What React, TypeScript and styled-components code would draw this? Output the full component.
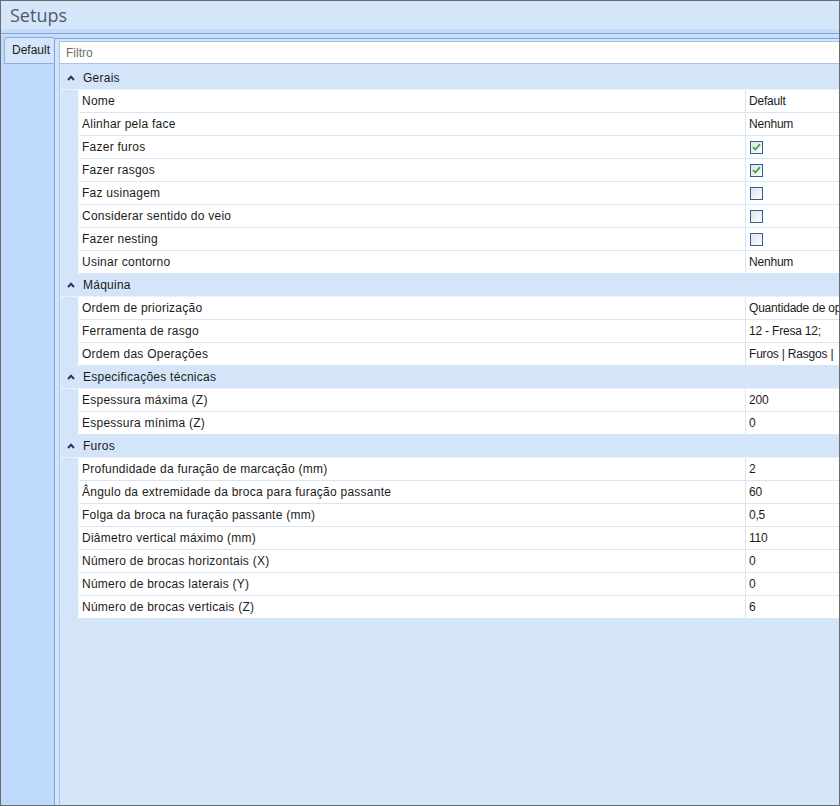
import React from 'react'
import styled, { createGlobalStyle } from 'styled-components'

type Prop = { name: string; value?: string; check?: boolean }
type Section = { title: string; rows: Prop[] }

const sections: Section[] = [
  {
    title: 'Gerais',
    rows: [
      { name: 'Nome', value: 'Default' },
      { name: 'Alinhar pela face', value: 'Nenhum' },
      { name: 'Fazer furos', check: true },
      { name: 'Fazer rasgos', check: true },
      { name: 'Faz usinagem', check: false },
      { name: 'Considerar sentido do veio', check: false },
      { name: 'Fazer nesting', check: false },
      { name: 'Usinar contorno', value: 'Nenhum' },
    ],
  },
  {
    title: 'Máquina',
    rows: [
      { name: 'Ordem de priorização', value: 'Quantidade de operações' },
      { name: 'Ferramenta de rasgo', value: '12 - Fresa 12;' },
      { name: 'Ordem das Operações', value: 'Furos | Rasgos |' },
    ],
  },
  {
    title: 'Especificações técnicas',
    rows: [
      { name: 'Espessura máxima (Z)', value: '200' },
      { name: 'Espessura mínima (Z)', value: '0' },
    ],
  },
  {
    title: 'Furos',
    rows: [
      { name: 'Profundidade da furação de marcação (mm)', value: '2' },
      { name: 'Ângulo da extremidade da broca para furação passante', value: '60' },
      { name: 'Folga da broca na furação passante (mm)', value: '0,5' },
      { name: 'Diâmetro vertical máximo (mm)', value: '110' },
      { name: 'Número de brocas horizontais (X)', value: '0' },
      { name: 'Número de brocas laterais (Y)', value: '0' },
      { name: 'Número de brocas verticais (Z)', value: '6' },
    ],
  },
]

const GlobalStyle = createGlobalStyle`
  body {
    margin: 0;
    font-family: "Liberation Sans", Arial, sans-serif;
    font-size: 12px;
    color: #1b1b1b;
  }
`

const Window = styled.div`
  width: 840px;
  height: 806px;
  box-sizing: border-box;
  border: 1px solid #6b6b6b;
  background: #d5e6fa;
  display: flex;
  flex-direction: column;
  overflow: hidden;
`

const TitleBar = styled.div`
  height: 33px;
  flex-shrink: 0;
  box-sizing: border-box;
  padding: 2px 0 0 9px;
  background: linear-gradient(#d5e6fa 0 28px, #c4dcfb 28px);
  border-bottom: 1px solid #7ea3d8;
  font-family: "Open Sans", "Noto Sans", sans-serif;
  font-size: 18px;
  color: #4f5a69;
`

const Body = styled.div`
  flex: 1;
  display: flex;
  min-height: 0;
  background: #c9defb;
  padding-top: 2px;
`

const TabStrip = styled.div`
  width: 53px;
  flex-shrink: 0;
  background: #bfd9fc;
  padding-top: 1px;
  box-sizing: border-box;
`

const Tab = styled.div`
  margin-left: 3px;
  height: 27px;
  box-sizing: border-box;
  border: 1px solid #8eafdc;
  border-right: none;
  border-top-left-radius: 4px;
  background: #d6e6fa;
  padding: 5px 0 0 7px;
  font-size: 12px;
  color: #1b1b1b;
`

const ContentPanel = styled.div`
  flex: 1;
  min-width: 0;
  display: flex;
  margin-top: 2px;
  border-left: 1px solid #7ea3d8;
  border-top: 1px solid #7ea3d8;
  background: #d4e5f9;
  padding: 2px 0 0 4px;
`

const Inner = styled.div`
  flex: 1;
  min-width: 0;
  display: flex;
  flex-direction: column;
  gap: 3px;
  border-left: 1px solid #a6c2e8;
  border-top: 1px solid #a6c2e8;
  overflow: hidden;
`

const Filter = styled.div`
  height: 22px;
  flex-shrink: 0;
  box-sizing: border-box;
  background: #fff;
  border-bottom: 1px solid #a9c4ea;
  padding: 4px 0 0 6px;
  color: #6d6d6d;
`

const Grid = styled.div`
  width: 920px;
  display: flex;
  flex-direction: column;
  border-left: 1px solid #e6effb;
`

const CategoryRow = styled.div`
  display: grid;
  grid-template-columns: 18px 1fr;
  height: 23px;
  box-sizing: border-box;
  background: #d4e5f9;
  border-bottom: 1px solid #eaf2fd;
  align-items: center;
`

const Chevron = styled.div`
  display: flex;
  justify-content: center;
  align-items: center;
  padding-left: 1px;
`

const CategoryTitle = styled.div`
  padding-left: 4px;
  color: #1b1b1b;
  letter-spacing: 0.25px;
`

const PropRow = styled.div`
  display: grid;
  grid-template-columns: 18px 667px 1fr;
  height: 23px;
`

const Indent = styled.div`
  background: #d4e5f9;
  border-right: 1px solid #f4f8fe;
`

const Cell = styled.div<{ $name?: boolean }>`
  background: #fff;
  box-sizing: border-box;
  border-bottom: 1px solid #d8e5f6;
  border-right: ${(p) => (p.$name ? '1px solid #d8e5f6' : 'none')};
  letter-spacing: ${(p) => (p.$name ? '0.25px' : '-0.2px')};
  padding: 0 0 0 3px;
  display: flex;
  align-items: center;
  white-space: nowrap;
  overflow: hidden;
`

const Box = styled.div<{ $checked: boolean }>`
  width: 13px;
  height: 13px;
  box-sizing: border-box;
  margin-left: 1px;
  border: 1px solid #2f5f95;
  background: linear-gradient(135deg, #dfe4ea 0%, #eef1f5 55%, #ffffff 100%);
  display: flex;
  align-items: center;
  justify-content: center;
`

function Check({ checked }: { checked: boolean }) {
  return (
    <Box $checked={checked}>
      {checked && (
        <svg width="9" height="8" viewBox="0 0 9 8">
          <path d="M1 4.2 L3.4 6.5 L8 1.2" fill="none" stroke="#3fa83f" strokeWidth="1.8" />
        </svg>
      )}
    </Box>
  )
}

export default function App() {
  return (
    <>
      <GlobalStyle />
      <Window>
        <TitleBar>Setups</TitleBar>
        <Body>
          <TabStrip>
            <Tab>Default</Tab>
          </TabStrip>
          <ContentPanel>
            <Inner>
              <Filter>Filtro</Filter>
              <Grid>
                {sections.map((s) => (
                  <React.Fragment key={s.title}>
                    <CategoryRow>
                      <Chevron>
                        <svg width="8" height="6" viewBox="0 0 8 6">
                          <path d="M1 5 L4 1.8 L7 5" fill="none" stroke="#1f3b66" strokeWidth="2" />
                        </svg>
                      </Chevron>
                      <CategoryTitle>{s.title}</CategoryTitle>
                    </CategoryRow>
                    {s.rows.map((r) => (
                      <PropRow key={r.name}>
                        <Indent />
                        <Cell $name>{r.name}</Cell>
                        <Cell>{r.check !== undefined ? <Check checked={r.check} /> : r.value}</Cell>
                      </PropRow>
                    ))}
                  </React.Fragment>
                ))}
              </Grid>
            </Inner>
          </ContentPanel>
        </Body>
      </Window>
    </>
  )
}
